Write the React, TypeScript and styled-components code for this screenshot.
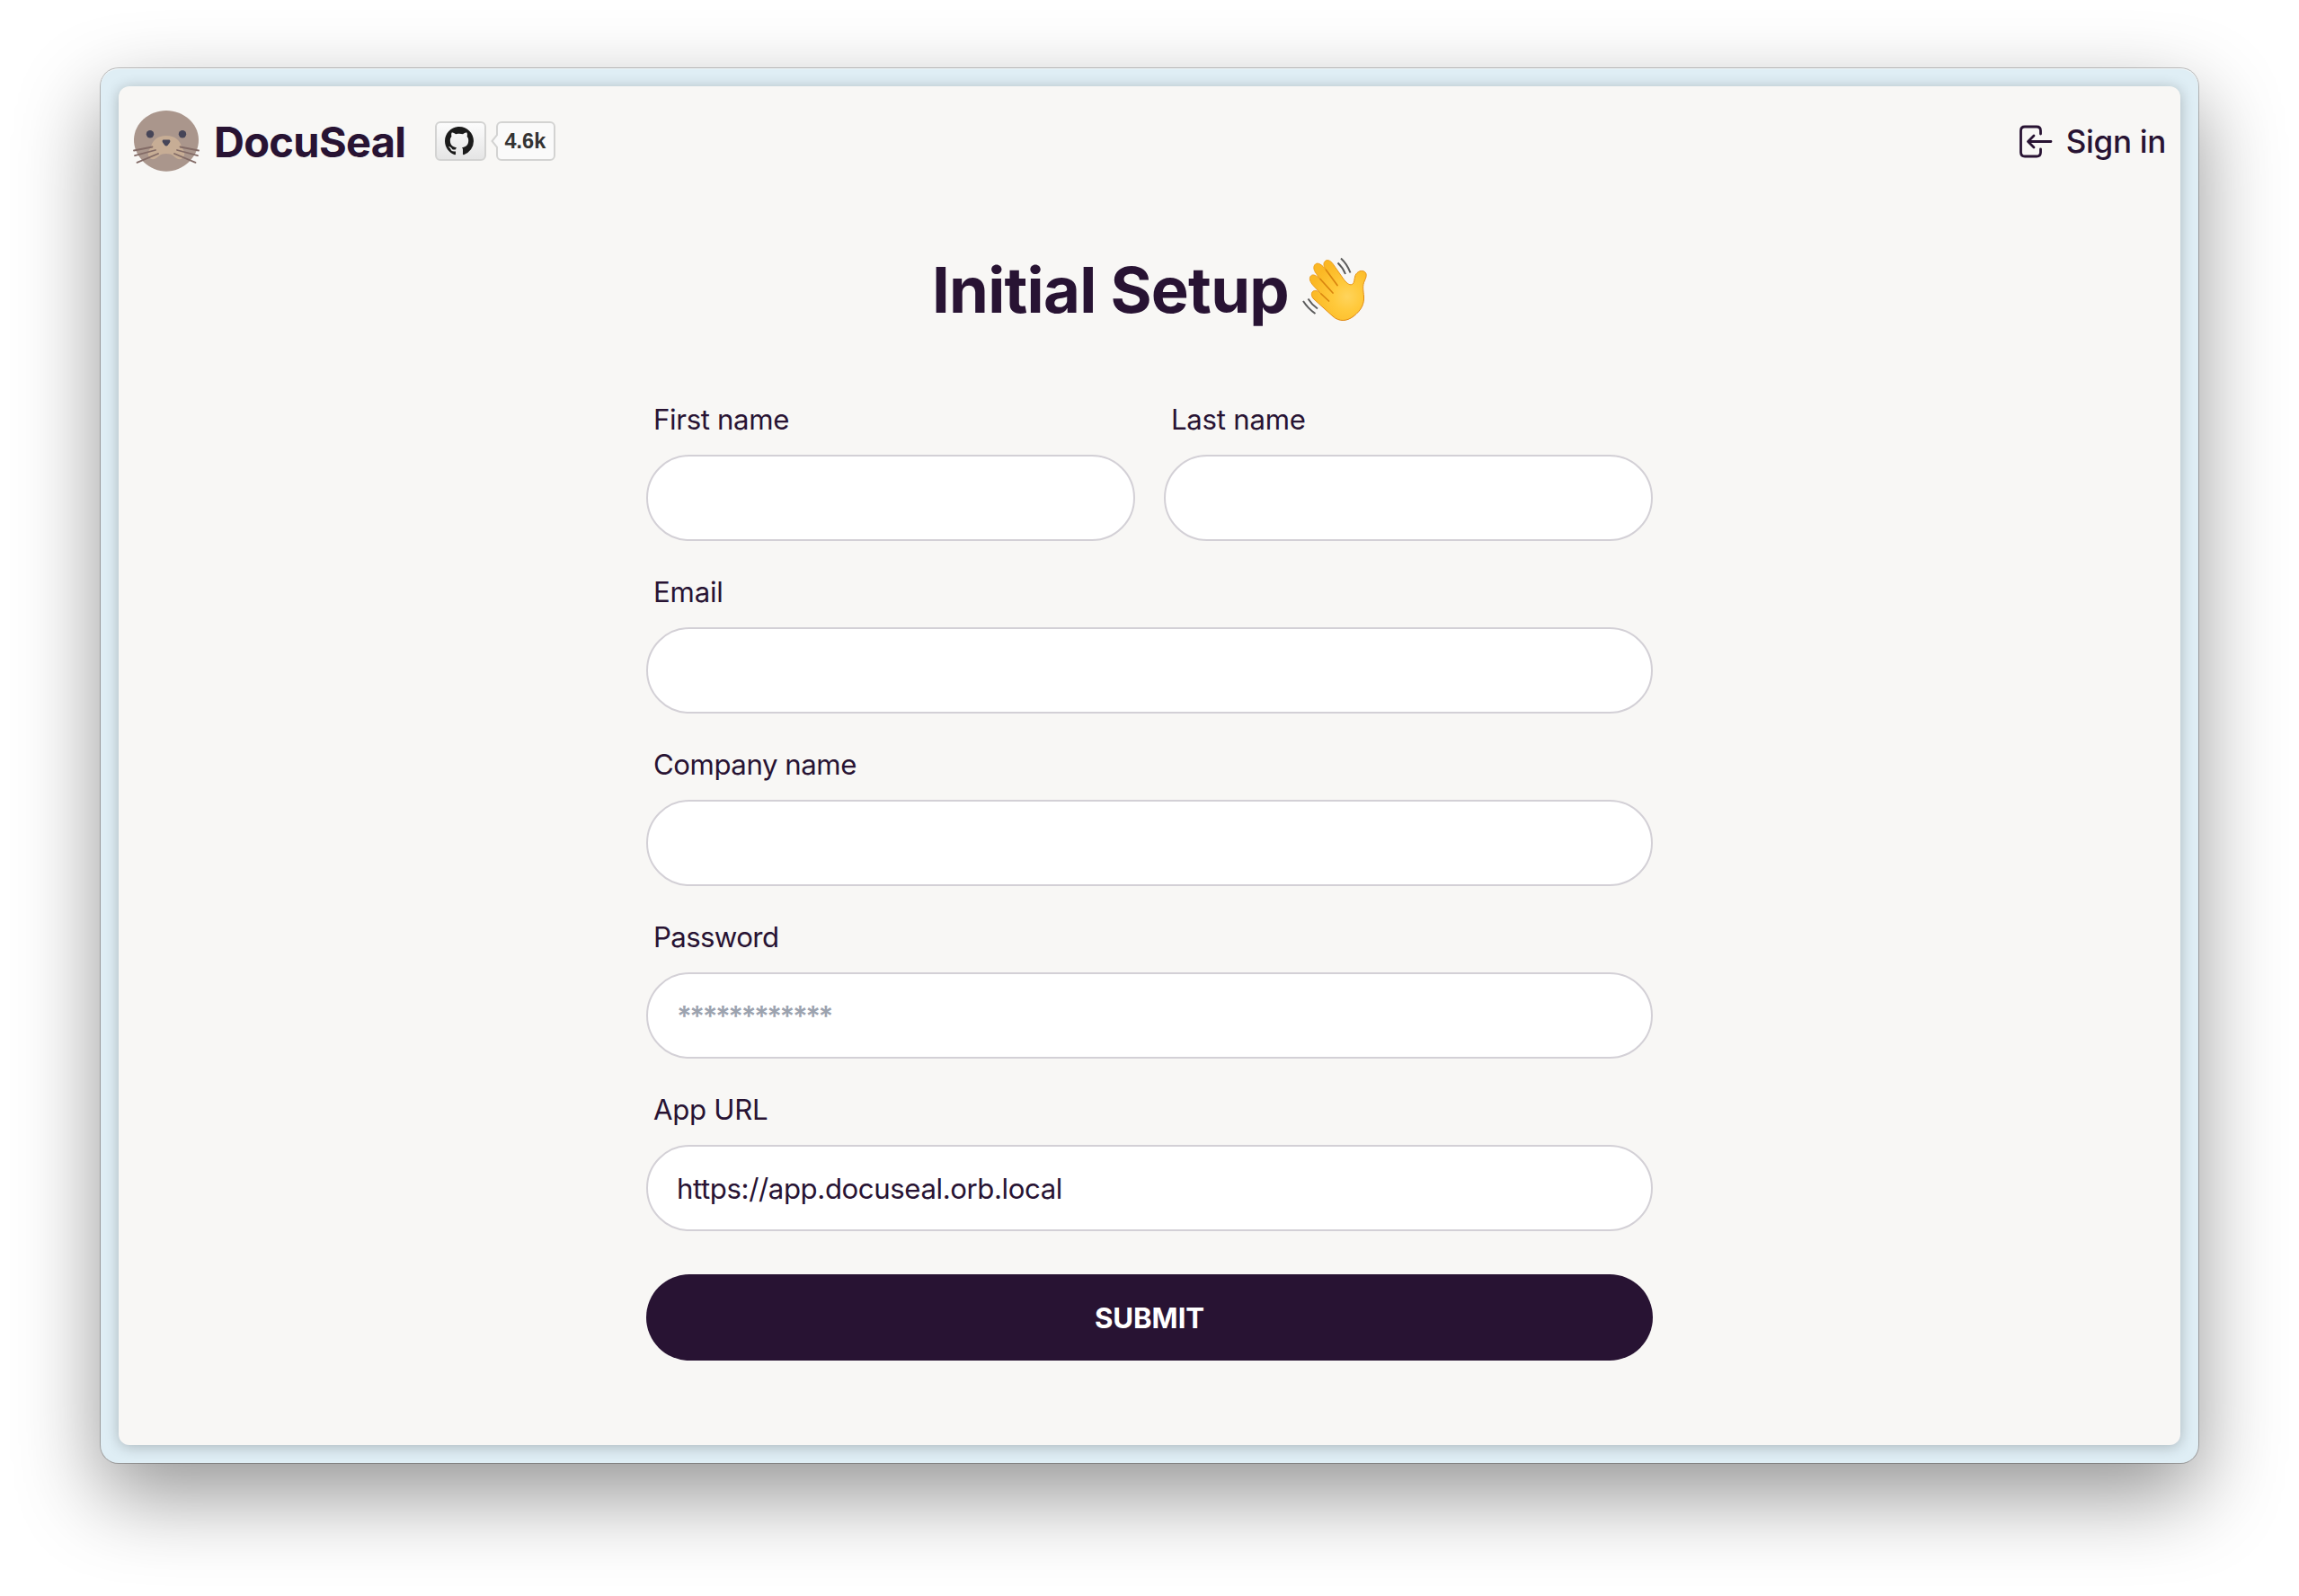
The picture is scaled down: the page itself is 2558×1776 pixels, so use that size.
import React from 'react';
import styled, { createGlobalStyle } from 'styled-components';

const ink = '#281333';

const GlobalStyle = createGlobalStyle`
  * { box-sizing: border-box; }
  html, body { margin: 0; background: #fff; overflow: hidden; }
  body { font-family: Inter, 'Liberation Sans', sans-serif; color: ${ink}; -webkit-font-smoothing: antialiased; }
`;

const Desktop = styled.main`
  width: 2558px;
  height: 1776px;
  padding: 76px 112px 148px;
  display: flex;
  overflow: hidden;
`;

const WindowFrame = styled.div`
  flex: 1;
  display: flex;
  padding: 20px;
  border-radius: 20px;
  background: #dfeef5;
  box-shadow: inset 0 1px 0 rgba(255, 255, 255, 0.6), 0 0 0 1px rgba(0, 0, 0, 0.24), 0 36px 92px rgba(0, 0, 0, 0.42);
`;

const Page = styled.div`
  flex: 1;
  display: flex;
  flex-direction: column;
  border-radius: 12px;
  background: #f8f7f5;
  box-shadow: 0 2px 16px rgba(0, 0, 0, 0.24);
`;

const Header = styled.header`
  display: flex;
  align-items: center;
  height: 122px;
  padding: 0 16px 0 15px;
`;

const Brand = styled.a`
  display: flex;
  align-items: center;
  gap: 15px;
`;

const BrandName = styled.span`
  padding-top: 2px;
  font-size: 47px;
  font-weight: 700;
  line-height: 64px;
  letter-spacing: -0.7px;
  white-space: nowrap;
`;

const StarButton = styled.a`
  display: flex;
  align-items: center;
  margin-left: 33px;
  gap: 11px;
`;

const StarIcon = styled.span`
  display: flex;
  align-items: center;
  justify-content: center;
  width: 57px;
  height: 44px;
  padding-right: 4px;
  border: 2px solid #d3d3d2;
  border-radius: 6px;
  background: linear-gradient(#fcfcfc, #e5e5e5);
`;

const StarCount = styled.span`
  position: relative;
  display: flex;
  align-items: center;
  justify-content: center;
  width: 66px;
  height: 44px;
  padding: 1px 2px 0 0;
  border: 2px solid #d3d3d2;
  border-radius: 6px;
  background: #fafafa;
  color: #333;
  font: 700 23.5px/39px 'Liberation Sans', Arial, sans-serif;
`;

const Pointer = styled.svg`
  position: absolute;
  left: -8px;
  top: 11px;
`;

const SignIn = styled.a`
  display: flex;
  align-items: center;
  gap: 14px;
  margin-left: auto;
  font-size: 35px;
  font-weight: 500;
  letter-spacing: -0.3px;
  white-space: nowrap;
`;

const Content = styled.section`
  width: 1120px;
  margin: 0 auto;
  display: flex;
  flex-direction: column;
`;

const Title = styled.h1`
  display: flex;
  align-items: center;
  justify-content: center;
  gap: 15px;
  margin: 65px 0 66px;
  height: 80px;
  font-size: 70.5px;
  line-height: 80px;
  font-weight: 700;
  letter-spacing: -0.75px;
  white-space: nowrap;

  svg { margin-top: -3px; }
`;

const Form = styled.form`
  display: flex;
  flex-direction: column;
`;

const Row = styled.div`
  display: grid;
  grid-template-columns: 1fr 1fr;
  gap: 32px;
`;

const Field = styled.label`
  display: flex;
  flex-direction: column;
  height: 192px;
`;

const LabelText = styled.span<{ $spacing: number }>`
  height: 77px;
  padding: 18px 8px 0;
  font-size: 31.2px;
  line-height: 40px;
  letter-spacing: ${(p) => p.$spacing}px;
`;

const Input = styled.input`
  width: 100%;
  height: 96px;
  padding: 1px 32px 0;
  border: 2px solid #d3d0d6;
  border-radius: 48px;
  outline: none;
  background: #fff;
  color: ${ink};
  font: 400 31.2px/40px Inter, sans-serif;
  letter-spacing: -0.41px;

  &::placeholder {
    color: #9ca3af;
    opacity: 1;
    font-weight: 600;
    letter-spacing: -2.5px;
  }
`;

const Submit = styled.button`
  height: 96px;
  margin-top: 29px;
  padding: 1px 0 0;
  border: 0;
  border-radius: 48px;
  background: ${ink};
  color: #fff;
  font: 650 31.2px/40px Inter, sans-serif;
  letter-spacing: -0.05px;
`;

const SealLogo = () => (
  <svg width="76" height="70" viewBox="0 0 76 70">
    <path d="M38 1C57 1 73.500 15 74 33C74.500 53 56 68.800 38 68.800C20 68.800 1.500 53 2 33C2.500 15 19 1 38 1Z" fill="#aa968c" />
    <path d="M38 29C48 29 53 34 55 41C57 45 60 49 57 53C54 57 50 55 46 51.500C42 48.300 34 48.300 30 51.500C26 55 22 57 19 53C16 49 19 45 21 41C23 34 28 29 38 29Z" fill="#c7ad95" />
    <circle cx="20" cy="27.300" r="4.200" fill="#464558" />
    <circle cx="56" cy="27.300" r="4.200" fill="#464558" />
    <path d="M35.500 33.600h5c2.500 0 2 2 1.300 3.200l-2.200 2.900c-.9 1-2.300 1-3.200 0l-2.200-2.900C33.500 35.600 33 33.600 35.500 33.600Z" fill="#464558" />
    <path d="M2 45.500L22.500 41.500M3 51.200L26 45M5.500 58.800L29 49M74 45.500L53.500 41.500M73 51.200L50 45M70.500 58.800L47 49" stroke="#836b66" strokeWidth="1.800" strokeLinecap="round" />
  </svg>
);

const GitHubMark = () => (
  <svg width="32" height="32" viewBox="0 0 16 16" fill="#1b1b1b">
    <path d="M8 0C3.580 0 0 3.580 0 8c0 3.540 2.290 6.530 5.470 7.590.4.070.55-.17.55-.38 0-.19-.01-.82-.01-1.490-2.010.37-2.530-.49-2.690-.94-.09-.23-.48-.94-.82-1.130-.28-.15-.68-.52-.01-.53.63-.01 1.080.58 1.230.82.72 1.210 1.870.87 2.330.66.07-.52.28-.87.51-1.070-1.780-.2-3.640-.89-3.640-3.950 0-.87.31-1.590.82-2.150-.08-.2-.36-1.020.08-2.120 0 0 .67-.21 2.200.82.64-.18 1.320-.27 2-.27s1.360.09 2 .27c1.530-1.040 2.200-.82 2.200-.82.44 1.100.16 1.920.08 2.120.51.56.82 1.270.82 2.150 0 3.070-1.870 3.750-3.650 3.950.29.25.54.73.54 1.480 0 1.070-.01 1.930-.01 2.200 0 .21.15.46.55.38A8.010 8.010 0 0 0 16 8c0-4.420-3.580-8-8-8Z" />
  </svg>
);

const LoginIcon = () => (
  <svg width="42" height="40" viewBox="0 0 42 40" fill="none" stroke={ink} strokeWidth="2.800" strokeLinecap="round" strokeLinejoin="round">
    <path d="M27.500 12V8.500Q27.500 4 23 4H10Q5.500 4 5.500 8.500V32.500Q5.500 37 10 37H23Q27.500 37 27.500 32.500V29" />
    <path d="M39 20.500H14M20 14L13.500 20.500L20 27" />
  </svg>
);

const WavingHand = () => (
  <svg width="72" height="72" viewBox="0 0 72 72">
    <defs>
      <radialGradient id="skin" gradientUnits="userSpaceOnUse" cx="50" cy="44" r="40">
        <stop offset="0" stopColor="#ffd45c" />
        <stop offset=".4" stopColor="#ffc93b" />
        <stop offset="1" stopColor="#fbb824" />
      </radialGradient>
      <linearGradient id="rim" x1="0" y1="0" x2=".75" y2="1">
        <stop offset="0" stopColor="#f0a41d" />
        <stop offset="1" stopColor="#dd8410" />
      </linearGradient>
    </defs>
    <path d="M11.500 38.500C9.300 41 10.500 44.500 13 47L34 66C41 72 49 72 57 66C66 59 69 52 68.500 44C68 37 66.500 32 69.500 26C71.500 22 72 18.500 69.500 16.500C66 14 61 16 59 20.500C57.500 24.500 58.500 28.500 55.500 30.500C52 32 48.500 28 45.500 24L34 7.500C31 3.500 27.500 2.500 25.500 4.500C22.800 7 24 11 26.500 14.500C22 8.500 17.500 5.500 14.500 8C11.500 10.800 13 15 15.500 18.500L20.500 25.500C16 20.500 12 18.500 9.500 21C7 24 9 28 12 31.500L21.500 41.500C18 38 14 36 11.500 38.500Z" fill="url(#skin)" stroke="url(#rim)" strokeWidth="1" />
    <path d="M26.500 14.500L39 31.500M20 24.500L34 40M21 41L29.500 49" fill="none" stroke="#d9850f" strokeWidth="1.700" strokeLinecap="round" />
    <path d="M43 1.500Q50 8 53.500 17.500M39.500 6.500Q45 11.500 48 19M1 49Q6.500 57.500 14.500 63M6.500 46.500Q10.500 53 17 57.500" fill="none" stroke="#5c5c5c" strokeWidth="2" />
  </svg>
);

type FieldProps = { label: string; type?: string; placeholder?: string; value?: string; spacing?: number };

const TextField = ({ label, type = 'text', placeholder, value, spacing = -0.5 }: FieldProps) => (
  <Field>
    <LabelText $spacing={spacing}>{label}</LabelText>
    <Input type={type} placeholder={placeholder} defaultValue={value} />
  </Field>
);

export default function App() {
  return (
    <>
      <GlobalStyle />
      <Desktop>
        <WindowFrame>
          <Page>
            <Header>
              <Brand>
                <SealLogo />
                <BrandName>DocuSeal</BrandName>
              </Brand>
              <StarButton>
                <StarIcon><GitHubMark /></StarIcon>
                <StarCount>
                  <Pointer width="8" height="18" viewBox="0 0 8 18">
                    <path d="M8 1L1.500 9L8 17" fill="#fafafa" stroke="#d3d3d2" strokeWidth="2" />
                  </Pointer>
                  4.6k
                </StarCount>
              </StarButton>
              <SignIn><LoginIcon />Sign in</SignIn>
            </Header>
            <Content>
              <Title>Initial Setup <WavingHand /></Title>
              <Form>
                <Row>
                  <TextField label="First name" spacing={-0.35} />
                  <TextField label="Last name" spacing={-0.27} />
                </Row>
                <TextField label="Email" spacing={-0.2} />
                <TextField label="Company name" spacing={-0.46} />
                <TextField label="Password" type="password" placeholder="************" spacing={-0.62} />
                <TextField label="App URL" value="https://app.docuseal.orb.local" spacing={-0.3} />
                <Submit type="button">SUBMIT</Submit>
              </Form>
            </Content>
          </Page>
        </WindowFrame>
      </Desktop>
    </>
  );
}
